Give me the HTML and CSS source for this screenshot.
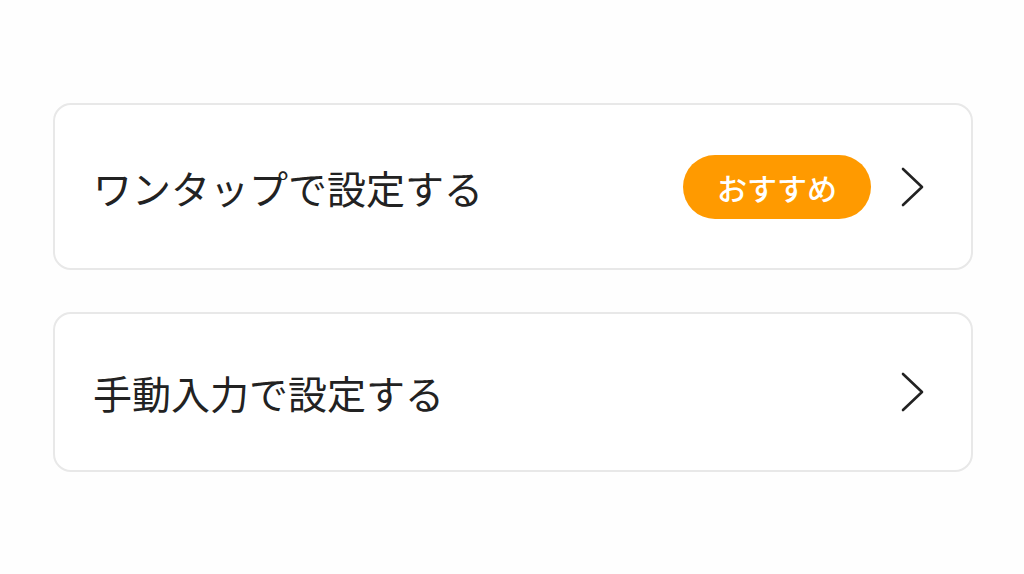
FILE: index.html
```html
<!DOCTYPE html>
<html>
<head>
  <meta charset="utf-8">
  <title>設定方法</title>
  <link rel="stylesheet" href="styles.css">
</head>
<body>
  <main class="options">
    <a href="#" class="option option-tap">
      <span class="option-label">ワンタップで設定する</span>
      <span class="badge">おすすめ</span>
      <svg class="chevron" viewBox="0 0 24 40" width="24" height="40">
        <path d="M2 2 L21 20 L2 38" fill="none" stroke="#222" stroke-width="2.6" stroke-linecap="round" stroke-linejoin="round"/>
      </svg>
    </a>
    <a href="#" class="option option-manual">
      <span class="option-label">手動入力で設定する</span>
      <svg class="chevron" viewBox="0 0 24 40" width="24" height="40">
        <path d="M2 2 L21 20 L2 38" fill="none" stroke="#222" stroke-width="2.6" stroke-linecap="round" stroke-linejoin="round"/>
      </svg>
    </a>
  </main>
</body>
</html>
```

FILE: styles.css
```css
* {
  box-sizing: border-box;
}
html, body {
  height: 100%;
}
body {
  background: #fefefe;
  color: #222;
  font-family: "Noto Sans CJK JP", "Noto Sans", sans-serif;
  margin: 0;
}
.options {
  display: flex;
  flex-direction: column;
  gap: 42px;
  padding: 103px 51px 0 53px;
}
.option {
  align-items: center;
  background: #fff;
  border: 2px solid #e8e8e8;
  border-radius: 18px;
  color: #222;
  display: flex;
  padding: 0 46px 0 38px;
  text-decoration: none;
}
.option-tap {
  height: 167px;
}
.option-manual {
  height: 160px;
}
.option-label {
  flex: 1;
  font-size: 39px;
  line-height: 1;
  padding-top: 1px;
}
.badge {
  align-items: center;
  background: #ff9a00;
  border-radius: 32px;
  color: #fff;
  display: flex;
  font-size: 30px;
  font-weight: 500;
  height: 64px;
  justify-content: center;
  margin-right: 30px;
  width: 188px;
}
.chevron {
  display: block;
  flex-shrink: 0;
}
```
